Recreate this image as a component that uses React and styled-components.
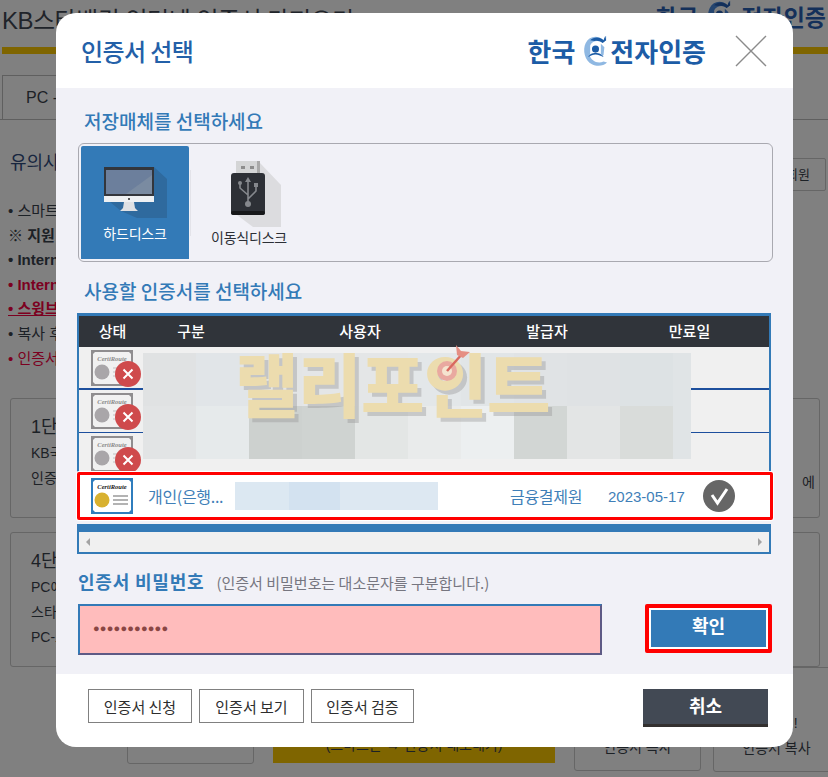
import React from 'react'
import styled, { createGlobalStyle } from 'styled-components'

const FONT = '"Liberation Sans", "Noto Sans CJK KR", sans-serif'
const BLUE = '#337ab7'

const Global = createGlobalStyle`
    html, body {
        margin: 0;
        padding: 0;
        height: 777px;
        overflow: hidden;
        background: #808080;
        font-family: ${FONT};
    }
`

/* ---------- dimmed page behind the dialog ---------- */

const Page = styled.div`
    position: relative;
    width: 828px;
    height: 777px;
    overflow: hidden;
    background: #808080;
    color: #1c2126;
`

const TopRow = styled.div`
    display: flex;
    justify-content: space-between;
    align-items: flex-start;
    height: 47px;
    padding-left: 2px;
`

const PageTitle = styled.div`
    font-size: 24px;
    line-height: 42px;
    letter-spacing: -0.5px;
    color: #20242a;
`

const PageLogo = styled.div`
    display: flex;
    align-items: center;
    gap: 8px;
    margin-right: 2px;
    height: 32px;
    font-family: "Noto Sans CJK KR", sans-serif;
    font-size: 23px;
    font-weight: 700;
    color: #14305a;
    white-space: nowrap;
`

const GoldBar = styled.div`
    height: 7px;
    margin-left: 2px;
    background: #7f6500;
`

const TabRow = styled.div`
    display: flex;
    height: 45px;
    margin-top: 21px;
    padding-left: 2px;
    border-bottom: 1px solid #5f5f5f;
    box-sizing: border-box;
`

const Tab = styled.div`
    width: 120px;
    padding-left: 23px;
    border: 1px solid #5f5f5f;
    border-bottom: 0;
    font-size: 16px;
    line-height: 44px;
    white-space: nowrap;
    overflow: hidden;
`

const NoticeHead = styled.div`
    display: flex;
    justify-content: space-between;
    align-items: flex-start;
    padding: 30px 2px 0 10px;
`

const NoticeTitle = styled.div`
    font-size: 18px;
    line-height: 26px;
    color: #17263f;
`

const SmallPageButton = styled.div`
    width: 110px;
    height: 33px;
    margin-top: 8px;
    box-sizing: border-box;
    border: 1px solid #666;
    border-radius: 2px;
    font-size: 13px;
    line-height: 31px;
    text-align: right;
    padding-right: 15px;
`

const Notes = styled.ul`
    list-style: none;
    margin: 8px 0 0;
    padding: 0 0 0 8px;
`

const Note = styled.li`
    font-size: 15px;
    line-height: 24.6px;
    white-space: nowrap;
    color: ${p => (p.$red ? '#7c0020' : '#1c2126')};
    font-weight: ${p => (p.$bold ? 700 : 400)};
    text-decoration: ${p => (p.$line ? 'underline' : 'none')};
`

const StepCard = styled.div`
    height: ${p => p.$h}px;
    margin: ${p => p.$top}px 8px 0 10px;
    padding: 14px 20px;
    box-sizing: border-box;
    border: 1px solid #666;
    border-radius: 3px;
    font-size: 14px;
    line-height: 25px;
    white-space: nowrap;
    position: relative;
`

const StepTitle = styled.div`
    font-size: 18px;
    line-height: 28px;
`

const StepEnd = styled.span`
    position: absolute;
    right: 4px;
    bottom: 22px;
`

const PageButtons = styled.div`
    display: flex;
    align-items: flex-start;
    padding-left: 127px;
    gap: 19px;
`

const PageButton = styled.div`
    width: 127px;
    height: ${p => p.$h}px;
    margin-left: ${p => p.$gap || 0}px;
    box-sizing: border-box;
    border: 1px solid #666;
    border-radius: 3px;
    display: flex;
    flex-direction: column;
    align-items: center;
    justify-content: flex-end;
    padding-bottom: 10px;
    font-size: 14px;
    line-height: 25px;
    flex: none;
`

const PageGoldButton = styled.div`
    width: 282px;
    height: 96px;
    background: #7f6500;
    display: flex;
    align-items: flex-end;
    justify-content: center;
    padding-bottom: 9px;
    box-sizing: border-box;
    font-size: 14px;
    flex: none;
`

/* ---------- dialog ---------- */

const Dialog = styled.div`
    position: absolute;
    left: 56px;
    top: 13px;
    width: 737px;
    height: 734px;
    display: flex;
    flex-direction: column;
    background: #fff;
    border-radius: 20px;
    overflow: hidden;
`

const Header = styled.div`
    display: flex;
    align-items: center;
    height: 75px;
    padding: 0 26px 0 25px;
    flex: none;
`

const DialogTitle = styled.div`
    font-size: 24px;
    font-weight: 500;
    font-family: "Noto Sans CJK KR", sans-serif;
    color: #2360a8;
    letter-spacing: -0.6px;
    flex: 1;
`

const Logo = styled.div`
    display: flex;
    align-items: center;
    margin-right: 29px;
    font-family: "Noto Sans CJK KR", sans-serif;
    font-size: 26px;
    font-weight: 700;
    color: #1c5ca6;
`

const LogoMark = styled.span`
    display: flex;
    margin: 0 1px 0 7px;
`

const Body = styled.div`
    flex: 1;
    background: #f1f1f7;
    padding: 21px 21px 0;
    display: flex;
    flex-direction: column;
    align-items: flex-start;
`

const SectionLabel = styled.div`
    font-family: "Noto Sans CJK KR", sans-serif;
    font-size: 19px;
    font-weight: 500;
    line-height: 24px;
    color: ${BLUE};
    margin: ${p => p.$top || 0}px 0 ${p => p.$bottom}px 7px;
`

const StorageBox = styled.div`
    width: 695px;
    height: 119px;
    box-sizing: border-box;
    margin-left: 1px;
    padding: 2px;
    display: flex;
    align-items: flex-start;
    border: 1px solid #a9a9b0;
    border-radius: 6px;
`

const StorageTile = styled.div`
    width: ${p => p.$w}px;
    height: 113px;
    box-sizing: border-box;
    padding-bottom: 16px;
    display: flex;
    flex-direction: column;
    align-items: center;
    background: ${p => (p.$active ? BLUE : 'transparent')};
    color: ${p => (p.$active ? '#fff' : '#2c2f36')};
    font-family: "Noto Sans CJK KR", sans-serif;
    font-size: 14px;
    border-radius: 2px 2px 0 0;
`

const TileDivider = styled.div`
    width: 1px;
    height: 66px;
    margin: 24px 0 0 1px;
    background: #e3e3e9;
`

const TileIcon = styled.div`
    flex: 1;
    padding-top: ${p => p.$top}px;
    margin-left: ${p => p.$left || 0}px;
`

const TileLabel = styled.div`
    line-height: 20px;
    letter-spacing: -0.2px;
`

const Table = styled.div`
    position: relative;
    width: 694px;
    box-sizing: border-box;
    border: solid ${BLUE};
    border-width: 3px 2px 0;
    background: #f0f0f0;
`

const HeadRow = styled.div`
    display: grid;
    grid-template-columns: 67px 90px 248px 126px 159px;
    height: 31px;
    background: #30343a;
    color: #fff;
    font-family: "Noto Sans CJK KR", sans-serif;
    font-size: 15px;
    font-weight: 500;
    line-height: 29px;
    text-align: center;
`

const Rows = styled.div`
    height: 125px;
    overflow: hidden;
`

const Row = styled.div`
    height: ${p => p.$h}px;
    box-sizing: border-box;
    padding: 3px 0 0 12px;
    border-bottom: ${p => p.$line}px solid #1d4f9d;
`

const IconWrap = styled.div`
    position: relative;
    width: 50px;
    height: 38px;
`

const Badge = styled.div`
    position: absolute;
    left: 24px;
    top: 11px;
    width: 26px;
    height: 26px;
    border-radius: 50%;
    background: #cf4a4c;
    display: flex;
    align-items: center;
    justify-content: center;
`

const Mosaic = styled.div`
    position: absolute;
    left: 64px;
    top: 37px;
    display: grid;
    grid-template-columns: repeat(10, 53px) 18px;
    grid-auto-rows: 53px;
    width: 548px;
`

const MosaicCell = styled.div`
    background: ${p => p.$bg};
`

const Watermark = styled.div`
    position: absolute;
    left: 156px;
    top: 30px;
    font-family: "Noto Sans CJK KR", sans-serif;
    font-size: 69px;
    font-weight: 900;
    line-height: 72px;
    letter-spacing: -0.5px;
    color: #ecdcae;
    text-shadow: 4px 4px 0 rgba(150, 150, 150, 0.4);
    white-space: nowrap;
`

const Dart = styled.svg`
    position: absolute;
    left: 358px;
    top: 27px;
`

const PickedRow = styled.div`
    display: flex;
    align-items: center;
    width: 696px;
    height: 48px;
    box-sizing: border-box;
    padding-left: 11px;
    background: #fff;
    border: 3px solid #f00;
    border-radius: 2px;
    box-shadow: 0 0 0 1px #fff;
    position: relative;
    font-size: 16px;
    color: #3f7fb8;
    font-family: "Noto Sans CJK KR", "Liberation Sans", sans-serif;
`

const Cell = styled.span`
    width: ${p => p.$w}px;
    padding-left: ${p => p.$pad || 0}px;
    box-sizing: border-box;
    flex: none;
    white-space: nowrap;
    font-family: ${p => (p.$latin ? FONT : 'inherit')};
    font-size: ${p => (p.$latin ? 15 : 16)}px;
    letter-spacing: ${p => (p.$latin ? 0 : -0.3)}px;
`

const Blur = styled.div`
    width: 203px;
    height: 28px;
    margin-right: 72px;
    flex: none;
    display: grid;
    grid-template-columns: 54px 51px 98px;
`

const Scroll = styled.div`
    width: 694px;
    height: 30px;
    margin-top: 4px;
    box-sizing: border-box;
    border: 2px solid ${BLUE};
    border-top-width: 8px;
    background: #f0f0f0;
    display: flex;
    align-items: center;
    justify-content: space-between;
    padding: 0 7px;
`

const Arrow = styled.div`
    width: 0;
    height: 0;
    border-top: 4px solid transparent;
    border-bottom: 4px solid transparent;
    border-${p => (p.$left ? 'right' : 'left')}: 4px solid #a3a3a3;
`

const PwLabelRow = styled.div`
    display: flex;
    align-items: baseline;
    gap: 12px;
    margin: 15px 0 9px 1px;
    line-height: 24px;
    font-family: "Noto Sans CJK KR", sans-serif;
`

const PwLabel = styled.div`
    font-size: 18px;
    font-weight: 700;
    color: ${BLUE};
    letter-spacing: 0.8px;
`

const PwHint = styled.div`
    font-size: 15px;
    color: #767680;
`

const PwRow = styled.div`
    display: flex;
    align-items: flex-start;
    width: 695px;
    margin-left: 1px;
`

const PwInput = styled.div`
    width: 524px;
    height: 51px;
    box-sizing: border-box;
    padding-left: 13px;
    background: #ffbcbc;
    border: 2px solid;
    border-color: ${BLUE} #5e5a85 #5e5a85 ${BLUE};
    color: #8a4644;
    font-size: 11px;
    font-weight: 700;
    line-height: 44px;
    letter-spacing: 0.2px;
`

const OkFrame = styled.div`
    margin-left: 43px;
    width: 127px;
    height: 49px;
    box-sizing: border-box;
    padding: 2px;
    border: 4px solid #f00;
    border-radius: 2px;
    background: #fff;
`

const OkButton = styled.button`
    display: block;
    width: 100%;
    height: 100%;
    border: 0;
    padding: 0 0 8px;
    background: ${BLUE};
    color: #fff;
    font-family: "Noto Sans CJK KR", sans-serif;
    font-size: 18px;
    font-weight: 700;
`

const Footer = styled.div`
    height: 73px;
    flex: none;
    display: flex;
    align-items: flex-start;
    padding: 15px 25px 0 32px;
    box-sizing: border-box;
`

const FootButton = styled.button`
    width: ${p => p.$w}px;
    height: 34px;
    margin-right: 7px;
    padding: 0;
    box-sizing: border-box;
    border: 1px solid #808080;
    background: #fff;
    color: #2d2d2d;
    font-family: "Noto Sans CJK KR", sans-serif;
    font-size: 15px;
`

const CancelButton = styled.button`
    margin-left: auto;
    width: 125px;
    height: 38px;
    padding: 0 0 4px;
    border: 0;
    border-bottom: 3px solid #33302f;
    background: #424954;
    color: #fff;
    font-family: "Noto Sans CJK KR", sans-serif;
    font-size: 18px;
    font-weight: 700;
`

/* ---------- drawings ---------- */

function Swirl({ size = 30, dim }) {
    const a = dim ? '#14305a' : '#1c5ca6'
    const b = dim ? '#25456f' : '#8fb8e2'
    return (
        <svg width={size} height={size * 1.25} viewBox="0 0 30 38">
            <path d="M24 7 C18 1 8 2 4 10 C0 18 3 30 11 34 C17 37 24 36 28 32 L24 31 C17 34 10 30 8 23 C6 15 10 8 17 8 C20 8 22 9 23 10 L27 7 L27 2 Z" fill={b} />
            <path d="M24 7 C20 3 13 3 9 7 L14 8 C17 7 20 8 23 10 L27 7 L26 2 Z" fill={a} />
            <circle cx="15" cy="17" r="4" fill={a} />
            <path d="M7 26 C8 20 22 20 24 26 C20 24 18 23 15 23 C12 23 10 24 7 26 Z" fill={a} />
            <path d="M5 15 L9 11 L9 24 L6 24 Z M25 15 L21 11 L21 24 L24 24 Z" fill={b} />
        </svg>
    )
}

function CloseIcon() {
    return (
        <svg width="32" height="32" viewBox="0 0 32 32">
            <path d="M1 1 L31 31 M31 1 L1 31" stroke="#8b8b8b" strokeWidth="1.4" fill="none" />
        </svg>
    )
}

function Monitor() {
    return (
        <svg width="63" height="51" viewBox="0 0 63 51" style={{ display: 'block' }}>
            <path d="M50 0 L63 12 L63 51 L33 51 L17 44 L0 30 Z" fill="#2f6a9e" />
            <rect x="0" y="0" width="50" height="29" fill="#33363c" />
            <rect x="2" y="3" width="46" height="24" fill="#6c7f9c" />
            <path d="M22 27 L48 8 L48 27 Z" fill="#7a8ba1" />
            <rect x="0" y="29" width="50" height="6" fill="#eef0f2" />
            <circle cx="25" cy="32" r="1.1" fill="#333" />
            <path d="M20 35 L30 35 L31 41 L34 44 L16 44 L19 41 Z" fill="#dfe1e4" />
        </svg>
    )
}

function Usb() {
    return (
        <svg width="51" height="66" viewBox="0 0 51 66" style={{ display: 'block' }}>
            <path d="M29 2 L50 24 L50 66 L22 66 L6 54 Z" fill="#dcdcdf" />
            <rect x="5" y="0" width="23" height="15" fill="#d4d5d6" />
            <rect x="10" y="5" width="4" height="3" fill="#8d8d8d" />
            <rect x="19" y="5" width="4" height="3" fill="#8d8d8d" />
            <rect x="26" y="0" width="3" height="15" fill="#a9a9a9" />
            <rect x="0" y="12" width="34" height="42" rx="3" fill="#2d3036" />
            <rect x="0" y="50" width="34" height="4" rx="2" fill="#17181a" />
            <path d="M17 18 V41 M17 34 L9 27 V23 M17 38 L25 30 V25" stroke="#85888d" strokeWidth="1.6" fill="none" />
            <path d="M17 16 L14 21 H20 Z" fill="#85888d" />
            <circle cx="9" cy="22" r="2" fill="#85888d" />
            <rect x="23" y="22" width="4" height="4" fill="#85888d" />
            <circle cx="17" cy="43" r="3" fill="#85888d" />
        </svg>
    )
}

function Cert({ live }) {
    const frame = live ? '#2f7dbd' : '#8f8d8f'
    const ink = live ? '#1a1a1a' : '#8c8c8c'
    const seal = live ? '#d8b130' : '#a9a6a9'
    const inner = live ? '#ffffff' : '#f1f1f1'
    return (
        <svg width="42" height="36" viewBox="0 0 42 36" style={{ display: 'block', flex: 'none' }}>
            <rect width="42" height="36" fill={frame} />
            <path d="M4 2 H38 L40 4 V32 L38 34 H4 L2 32 V4 Z" fill={inner} />
            <text x="21" y="11" fontSize="6.5" fontStyle="italic" fontWeight="700" textAnchor="middle" fontFamily="Liberation Serif, serif" fill={ink}>CertiRoute</text>
            <circle cx="11" cy="22" r="7.5" fill={seal} />
            <path d="M22 18 H37 M22 22 H37 M22 26 H37" stroke={live ? '#9a9a9a' : '#d0d0d0'} strokeWidth="1.4" />
        </svg>
    )
}

function CrossMark() {
    return (
        <svg width="12" height="12" viewBox="0 0 12 12">
            <path d="M1.5 1.5 L10.5 10.5 M10.5 1.5 L1.5 10.5" stroke="#fff" strokeWidth="2" />
        </svg>
    )
}

function CheckDisc() {
    return (
        <svg width="32" height="32" viewBox="0 0 32 32" style={{ flex: 'none' }}>
            <circle cx="16" cy="16" r="16" fill="#666" />
            <path d="M9 15 L14.5 23 L24 9" stroke="#fff" strokeWidth="3" fill="none" />
        </svg>
    )
}

/* ---------- data ---------- */

const mosaicColors = [
    '#e0e2e3', '#e1e5e8', '#e3e5e6', '#e4e6e7', '#e4e6e7', '#e3e7e9', '#e1e5e7', '#e0e3e5', '#dfe2e4', '#dde2e4', '#e0e4e6',
    '#e2e4e5', '#e6eaeb', '#cdd1cf', '#cfd3d1', '#e3e6e5', '#e9ebeb', '#eceff0', '#d2d6d4', '#e3e5e5', '#d9dcda', '#e0e4e6',
]

const revokedRows = [
    { h: 43, line: 2 },
    { h: 43, line: 1 },
    { h: 38, line: 0 },
]

const notes = [
    { text: '• 스마트폰 인증서 복사 서비스를 이용하실 수 있습니다.' },
    { text: '※ 지원 환경을 확인하여 주시기 바랍니다.', bold: true },
    { text: '• Internet Explorer 브라우저를 이용하여 주세요.', bold: true },
    { text: '• Internet Explorer 버전을 확인하여 주세요.', bold: true, red: true },
    { text: '• 스윙브라우저에서는 이용이 불가합니다.', bold: true, red: true, line: true },
    { text: '• 복사 후 인증서를 확인하시기 바랍니다.' },
    { text: '• 인증서 비밀번호를 확인하여 주세요.', red: true },
]

function App() {
    return (
        <Page>
            <Global />

            <TopRow>
                <PageTitle>KB스타뱅킹 인터넷 인증서 가져오기</PageTitle>
                <PageLogo>한국<Swirl size={27} dim />전자인증</PageLogo>
            </TopRow>
            <GoldBar />
            <TabRow>
                <Tab>PC - 스마트폰</Tab>
            </TabRow>
            <NoticeHead>
                <NoticeTitle>유의사항</NoticeTitle>
                <SmallPageButton>회원</SmallPageButton>
            </NoticeHead>
            <Notes>
                {notes.map(n => (
                    <Note key={n.text} $bold={n.bold} $red={n.red} $line={n.line}>{n.text}</Note>
                ))}
            </Notes>
            <StepCard $h={120} $top={27}>
                <StepTitle>1단계</StepTitle>
                <div>KB국민은행 인터넷뱅킹에 접속합니다.</div>
                <div>인증센터로 이동합니다.</div>
                <StepEnd>에</StepEnd>
            </StepCard>
            <StepCard $h={135} $top={14}>
                <StepTitle>4단계</StepTitle>
                <div>PC에서 인증번호를 입력합니다.</div>
                <div>스타뱅킹에서 확인합니다.</div>
                <div>PC-스마트폰 복사 완료</div>
            </StepCard>
            <PageButtons>
                <PageButton $h={97} />
                <PageGoldButton>(스마트폰 → 인증서 내보내기)</PageGoldButton>
                <PageButton $h={104}>인증서 복사</PageButton>
                <PageButton $h={105} $gap={-7}>
                    <span>인증서!</span>
                    <span>인증서 복사</span>
                </PageButton>
            </PageButtons>

            <Dialog>
                <Header>
                    <DialogTitle>인증서 선택</DialogTitle>
                    <Logo>한국<LogoMark><Swirl size={27} /></LogoMark>전자인증</Logo>
                    <CloseIcon />
                </Header>

                <Body>
                    <SectionLabel $bottom={10}>저장매체를 선택하세요</SectionLabel>
                    <StorageBox>
                        <StorageTile $active $w={108}>
                            <TileIcon $top={21}><Monitor /></TileIcon>
                            <TileLabel>하드디스크</TileLabel>
                        </StorageTile>
                        <TileDivider />
                        <StorageTile $w={116}>
                            <TileIcon $top={15} $left={15}><Usb /></TileIcon>
                            <TileLabel>이동식디스크</TileLabel>
                        </StorageTile>
                    </StorageBox>

                    <SectionLabel $top={17} $bottom={10}>사용할 인증서를 선택하세요</SectionLabel>
                    <Table>
                        <HeadRow>
                            <span>상태</span>
                            <span>구분</span>
                            <span>사용자</span>
                            <span>발급자</span>
                            <span>만료일</span>
                        </HeadRow>
                        <Rows>
                            {revokedRows.map((r, i) => (
                                <Row key={i} $h={r.h} $line={r.line}>
                                    <IconWrap>
                                        <Cert />
                                        <Badge><CrossMark /></Badge>
                                    </IconWrap>
                                </Row>
                            ))}
                        </Rows>
                        <Mosaic>
                            {mosaicColors.map((c, i) => <MosaicCell key={i} $bg={c} />)}
                        </Mosaic>
                        <Watermark>랠리포인트</Watermark>
                        <Dart width="34" height="42" viewBox="0 0 34 42">
                            <circle cx="10" cy="28" r="10" fill="#e9a9a0" />
                            <circle cx="10" cy="28" r="5" fill="#f5e4cf" />
                            <path d="M10 28 L26 10" stroke="#d9695f" strokeWidth="2.5" />
                            <path d="M19 2 L24 8 L33 9 L26 15 L20 12 Z" fill="#e58f84" />
                        </Dart>
                    </Table>
                    <PickedRow>
                        <Cert live />
                        <Cell $w={102} $pad={15}>개인(은행...</Cell>
                        <Blur>
                            <MosaicCell $bg="#dce8f2" />
                            <MosaicCell $bg="#d3e2f0" />
                            <MosaicCell $bg="#dde8f2" />
                        </Blur>
                        <Cell $w={98}>금융결제원</Cell>
                        <Cell $w={95} $latin>2023-05-17</Cell>
                        <CheckDisc />
                    </PickedRow>
                    <Scroll>
                        <Arrow $left />
                        <Arrow />
                    </Scroll>

                    <PwLabelRow>
                        <PwLabel>인증서 비밀번호</PwLabel>
                        <PwHint>(인증서 비밀번호는 대소문자를 구분합니다.)</PwHint>
                    </PwLabelRow>
                    <PwRow>
                        <PwInput>●●●●●●●●●●●</PwInput>
                        <OkFrame><OkButton>확인</OkButton></OkFrame>
                    </PwRow>
                </Body>

                <Footer>
                    <FootButton $w={104}>인증서 신청</FootButton>
                    <FootButton $w={105}>인증서 보기</FootButton>
                    <FootButton $w={103}>인증서 검증</FootButton>
                    <CancelButton>취소</CancelButton>
                </Footer>
            </Dialog>
        </Page>
    )
}

export default App
